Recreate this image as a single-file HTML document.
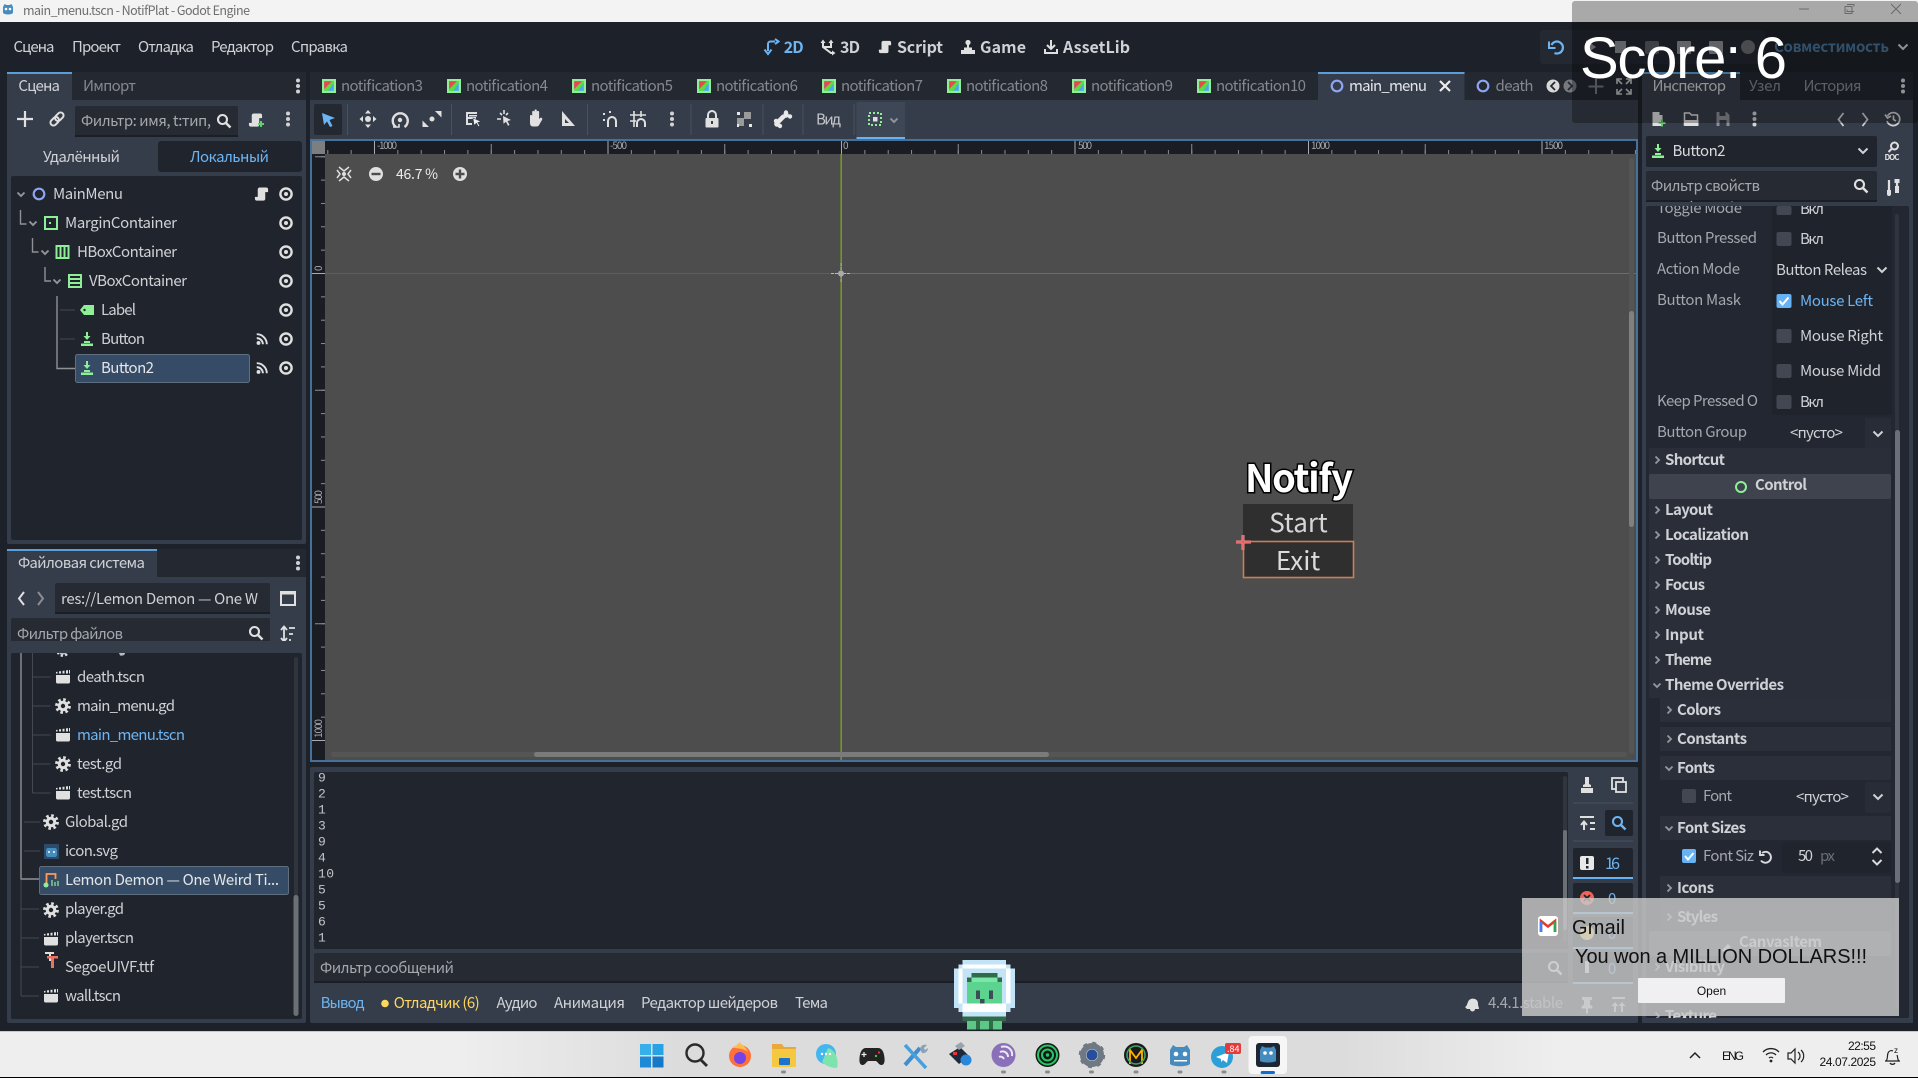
<!DOCTYPE html>
<html><head><meta charset="utf-8"><title>main_menu.tscn - NotifPlat - Godot Engine</title>
<style>
html,body{margin:0;padding:0;background:#1d2129;width:1918px;height:1078px;overflow:hidden}
svg{display:block}
text{font-family:"Noto Sans CJK SC","Liberation Sans",sans-serif;font-size:15px;fill:#cfd1d5;white-space:pre}
.d{fill:#85888e}.l{fill:#a4a7ac}.b{font-weight:700;fill:#cfd1d5}.blue{fill:#6cb4f2}
.m{font-family:"Liberation Mono","DejaVu Sans Mono",monospace;font-size:13px;fill:#c2c4c8}
.r{font-size:10px;fill:#a9abae}
.w{font-family:"Liberation Sans",sans-serif;fill:#101010}
</style></head><body>
<svg xmlns="http://www.w3.org/2000/svg" width="1918" height="1078" viewBox="0 0 1918 1078">
<defs>
<symbol id="eye" viewBox="0 0 16 16"><circle cx="8" cy="8" r="5.6" fill="none" stroke="#e0e0e0" stroke-width="2.4"/><circle cx="8" cy="8" r="2" fill="#e0e0e0"/></symbol>
<symbol id="chev" viewBox="0 0 16 16"><path d="M4.500 6.500l3.500 3.500 3.500-3.500" fill="none" stroke="#93969c" stroke-width="1.900"/></symbol>
<symbol id="chr" viewBox="0 0 16 16"><path d="M6.500 4.500l3.500 3.500-3.500 3.500" fill="none" stroke="#93969c" stroke-width="1.900"/></symbol>
<symbol id="sig" viewBox="0 0 16 16"><circle cx="4" cy="12.500" r="2.200" fill="#e0e0e0"/><path d="M2 7a7 7 0 0 1 7 7M2 2.500a11.500 11.500 0 0 1 11.500 11.500" fill="none" stroke="#e0e0e0" stroke-width="2.200"/></symbol>
<symbol id="script" viewBox="0 0 16 16"><path d="M6 1h7c1.500 0 2 1 2 2v3h-3v7c0 1.500-1 2-2 2H3c-1.500 0-2-1-2-2v-2h3V3c0-1 1-2 2-2z" fill="#e0e0e0"/></symbol>
<symbol id="btn" viewBox="0 0 16 16"><path d="M7 1h2v4h2.500L8 9 4.500 5H7zM5 10h6v2H5zM2 12.500h12V15H2z" fill="#8eef97"/></symbol>
<symbol id="clap" viewBox="0 0 16 16"><path d="M1 6h14v7c0 1-.7 1.500-1.500 1.500h-11C1.700 14.500 1 14 1 13zM1 4.500V3l1.500-.3v1.800zM4 4.500V2.400l2-.3v2.400zM7.500 4.500V1.900l2-.3v2.900zM11 4.500V1.400l2-.3v3.400zM14 4.500V1l1 0v3.500z" fill="#e0e0e0"/></symbol>
<symbol id="gear" viewBox="0 0 16 16"><circle cx="8" cy="8" r="6.500" fill="none" stroke="#e0e0e0" stroke-width="2.800" stroke-dasharray="2.600 2.500"/><circle cx="8" cy="8" r="5.300" fill="#e0e0e0"/><circle cx="8" cy="8" r="2.200" fill="#20242d"/></symbol>
<symbol id="tex" viewBox="0 0 16 16"><rect width="16" height="16" fill="#8eef97"/><rect x="2.500" y="2.500" width="11" height="11" fill="#49a8f0"/><path d="M2.500 2.500h9l-9 9z" fill="#e84a4a"/><path d="M7 13.500h-4.500v-2l9-9h2v2z" fill="#5fdc3c"/></symbol>
<symbol id="search" viewBox="0 0 16 16"><circle cx="6.500" cy="6.500" r="4.500" fill="none" stroke="#e0e0e0" stroke-width="2.100"/><path d="M10 10l4.500 4.500" stroke="#e0e0e0" stroke-width="2.500"/></symbol>
<symbol id="dots" viewBox="0 0 16 16"><circle cx="8" cy="2.500" r="2" fill="#d0d2d5"/><circle cx="8" cy="8" r="2" fill="#d0d2d5"/><circle cx="8" cy="13.500" r="2" fill="#d0d2d5"/></symbol>
<symbol id="ddown" viewBox="0 0 16 16"><path d="M3.500 5.500l4.500 4.500 4.500-4.500" fill="none" stroke="#d0d2d5" stroke-width="2"/></symbol>
<pattern id="hs" patternUnits="userSpaceOnUse" x="841" y="150" width="23.35" height="4"><rect width="1" height="4" fill="#8b8d91"/></pattern>
<pattern id="hm" patternUnits="userSpaceOnUse" x="841" y="144" width="116.75" height="10"><rect width="1" height="10" fill="#8b8d91"/></pattern>
<pattern id="hb" patternUnits="userSpaceOnUse" x="841" y="141" width="233.5" height="13"><rect width="1" height="13" fill="#a9abae"/></pattern>
<pattern id="vs" patternUnits="userSpaceOnUse" x="321" y="273" width="4" height="23.35"><rect width="4" height="1" fill="#8b8d91"/></pattern>
<pattern id="vm" patternUnits="userSpaceOnUse" x="315" y="273" width="10" height="116.75"><rect width="10" height="1" fill="#8b8d91"/></pattern>
<pattern id="vb" patternUnits="userSpaceOnUse" x="312" y="273" width="13" height="233.5"><rect width="13" height="1" fill="#a9abae"/></pattern>
<linearGradient id="tb" x1="0" x2="1" y1="0" y2="0"><stop offset="0" stop-color="#eee"/><stop offset=".2" stop-color="#dcdcdc"/><stop offset=".8" stop-color="#dcdcdc"/><stop offset="1" stop-color="#eee"/></linearGradient>
</defs>

<!-- window base -->
<rect width="1918" height="1078" fill="#1d2129"/>
<rect width="1918" height="22" fill="#f3f3f3"/>
<path d="M3 7l1.500-3 2 1h3l2-1L13 7v6c-2 2-8 2-10 0z" fill="#478cbf"/><circle cx="6" cy="9" r="1.300" fill="#fff"/><circle cx="10" cy="9" r="1.300" fill="#fff"/>
<text x="23" y="15" textLength="227" style="font-size:12.500px;fill:#6e6e6e">main_menu.tscn - NotifPlat - Godot Engine</text>

<!-- menu bar -->
<text x="13.500" y="52" textLength="41">Сцена</text>
<text x="72" y="52" textLength="49">Проект</text>
<text x="138" y="52" textLength="56">Отладка</text>
<text x="211" y="52" textLength="63">Редактор</text>
<text x="291" y="52" textLength="57">Справка</text>

<!-- main screen switch -->
<path d="M768 51V44c0-1.500 1-2.500 2.500-2.500H775M764.500 49.500l3.500 4.500 3.500-4.500M775 39l3.500 2.500-3.500 2.500" fill="none" stroke="#6cb4f2" stroke-width="2"/>
<text x="783.700" y="53" textLength="20" class="b" style="fill:#6cb4f2;font-size:16px">2D</text>
<path d="M823 42v5l8 6h2M823 47h8v-5" fill="none" stroke="#e0e0e0" stroke-width="2"/><path d="M823 39.500l-2.500 3.500h5zM831 39.500l-2.500 3.500h5zM835.500 53l-3.500-2.500v5z" fill="#e0e0e0"/>
<text x="840" y="53" textLength="20" class="b" style="font-size:16px">3D</text>
<use href="#script" x="878" y="40" width="14" height="14"/>
<text x="897" y="53" textLength="46" class="b" style="font-size:16px">Script</text>
<circle cx="968" cy="42.500" r="2.600" fill="#e0e0e0"/><path d="M967 44h2v4h-2zM964 47.500h8v3h-8zM961 50h14v4h-14z" fill="#e0e0e0"/>
<text x="980" y="53" textLength="46" class="b" style="font-size:16px">Game</text>
<path d="M1051 40v9M1047 45l4 4 4-4M1045 49v4h12v-4" fill="none" stroke="#e0e0e0" stroke-width="2"/>
<text x="1063" y="53" textLength="67" class="b" style="font-size:16px">AssetLib</text>

<!-- run bar -->
<rect x="1540" y="30" width="225" height="34" rx="3" fill="#232831"/>
<path d="M1551.500 45a6 6 0 1 1 3 8" fill="none" stroke="#6cb4f2" stroke-width="2.200"/><path d="M1549 41.500v6.500h6.500" fill="none" stroke="#6cb4f2" stroke-width="2"/>
<path d="M1586 40l10 7-10 7z" fill="#8d8f93"/><rect x="1615" y="41" width="11" height="12" fill="#8d8f93"/>
<rect x="1645" y="41" width="14" height="13" rx="2" fill="#5a5d63"/><rect x="1677" y="41" width="14" height="13" rx="1" fill="#8d8f93"/><rect x="1709" y="41" width="14" height="13" rx="1" fill="#8d8f93"/>
<circle cx="1748" cy="47" r="7" fill="#6a6c70"/>
<text x="1774" y="52" textLength="115" class="b" style="fill:#47739a">Совместимость</text>
<use href="#ddown" x="1895" y="39" width="16" height="16"/>

<!-- scene dock -->
<rect x="7" y="72" width="299" height="472" rx="2" fill="#363d4a"/>
<rect x="7" y="72" width="299" height="28" fill="#232831"/>
<rect x="7" y="72" width="65" height="28" fill="#363d4a"/><rect x="7" y="72" width="65" height="2" fill="#5c9fd8"/>
<text x="18.400" y="91" textLength="41.600">Сцена</text>
<text x="83" y="91" textLength="53" class="d">Импорт</text>
<use href="#dots" x="290" y="78" width="16" height="16"/>
<path d="M25 111v16M17 119h16" stroke="#e0e0e0" stroke-width="2.200"/>
<g transform="rotate(-45 57 119)" fill="none" stroke="#e0e0e0" stroke-width="2"><rect x="49" y="116" width="9.500" height="6" rx="3"/><rect x="55.500" y="116" width="9.500" height="6" rx="3"/></g>
<rect x="75" y="106" width="163" height="31" rx="2" fill="#252a33"/><rect x="75" y="135" width="163" height="2" fill="#1b1e25"/>
<text x="81" y="126" textLength="130" class="l">Фильтр: имя, t:тип,</text>
<use href="#search" x="216" y="113" width="16" height="16"/>
<use href="#script" x="248" y="112" width="15" height="16"/><path d="M258 124h6M261 121v6" stroke="#5fd36a" stroke-width="2"/>
<use href="#dots" x="280" y="111" width="16" height="16"/>
<text x="43" y="162" textLength="77">Удалённый</text>
<rect x="158" y="141" width="144" height="31" rx="3" fill="#20242d"/>
<text x="190" y="162" textLength="79" class="blue">Локальный</text>
<rect x="11" y="176" width="291" height="364" rx="2" fill="#20242d"/>
<!-- tree lines -->
<path d="M20.500 210v14h6M32.500 238v14h6M45 267v14h6M57 296v72.500h19" fill="none" stroke="#8f9196" stroke-width="1.400"/>
<path d="M60 310h15M60 339h15" stroke="#43474f" stroke-width="1"/>
<use href="#chev" x="13" y="186" width="16" height="16"/><use href="#chev" x="25" y="215" width="16" height="16"/><use href="#chev" x="37" y="244" width="16" height="16"/><use href="#chev" x="49" y="273" width="16" height="16"/>
<circle cx="39" cy="194" r="5.300" fill="none" stroke="#8da5f3" stroke-width="2.200"/>
<text x="53" y="199" textLength="70">MainMenu</text>
<rect x="45" y="217" width="12" height="12" fill="none" stroke="#8eef97" stroke-width="2"/><rect x="49" y="222" width="2" height="2" fill="#8eef97"/>
<text x="65" y="228" textLength="112">MarginContainer</text>
<rect x="56.500" y="246" width="12" height="12" fill="none" stroke="#8eef97" stroke-width="2"/><path d="M60.500 246v12M64.500 246v12" stroke="#8eef97" stroke-width="2"/>
<text x="77" y="257" textLength="100">HBoxContainer</text>
<rect x="69" y="275" width="12" height="12" fill="none" stroke="#8eef97" stroke-width="2"/><path d="M69 279h12M69 283h12" stroke="#8eef97" stroke-width="2"/>
<text x="89" y="286" textLength="98">VBoxContainer</text>
<path d="M84 305h10v10H84l-4-5z" fill="#8eef97"/><circle cx="84.500" cy="310" r="1.200" fill="#20242d"/>
<text x="101" y="315" textLength="35">Label</text>
<use href="#btn" x="79" y="331" width="16" height="16"/>
<text x="101" y="344" textLength="44">Button</text>
<rect x="75.500" y="354.500" width="174" height="28" rx="2" fill="#364c66" stroke="#5f6f80"/>
<use href="#btn" x="79" y="360" width="16" height="16"/>
<text x="101" y="373" textLength="53" style="fill:#e4e6e8">Button2</text>
<use href="#script" x="254" y="186" width="15" height="16"/>
<use href="#sig" x="255" y="332" width="14" height="14"/><use href="#sig" x="255" y="361" width="14" height="14"/>
<use href="#eye" x="278" y="186" width="16" height="16"/><use href="#eye" x="278" y="215" width="16" height="16"/><use href="#eye" x="278" y="244" width="16" height="16"/><use href="#eye" x="278" y="273" width="16" height="16"/><use href="#eye" x="278" y="302" width="16" height="16"/><use href="#eye" x="278" y="331" width="16" height="16"/><use href="#eye" x="278" y="360" width="16" height="16"/>

<!-- filesystem dock -->
<rect x="7" y="549" width="299" height="474" rx="2" fill="#363d4a"/>
<rect x="7" y="549" width="299" height="28" fill="#232831"/>
<rect x="7" y="549" width="150" height="28" fill="#363d4a"/><rect x="7" y="549" width="150" height="2" fill="#5c9fd8"/>
<text x="18" y="568" textLength="127">Файловая система</text>
<use href="#dots" x="290" y="555" width="16" height="16"/>
<path d="M24 592l-5 6.500 5 6.500" fill="none" stroke="#e0e0e0" stroke-width="2"/><path d="M38 592l5 6.500-5 6.500" fill="none" stroke="#8a8d92" stroke-width="2"/>
<rect x="55" y="583" width="215" height="31" rx="2" fill="#252a33"/><rect x="55" y="612" width="215" height="2" fill="#1b1e25"/>
<text x="61" y="604" textLength="197">res://Lemon Demon — One W</text>
<rect x="281" y="592" width="14" height="13" fill="none" stroke="#e0e0e0" stroke-width="2"/><rect x="280" y="591" width="16" height="3.500" fill="#e0e0e0"/>
<rect x="11" y="618" width="259" height="31" rx="2" fill="#252a33"/><rect x="11" y="647" width="259" height="2" fill="#1b1e25"/>
<text x="17" y="639" textLength="106" class="l">Фильтр файлов</text>
<use href="#search" x="248" y="625" width="16" height="16"/>
<path d="M284 627v14M281 630l3-3.500 3 3.500M281 638l3 3.500 3-3.500M289 628h6M289 634h4M289 640h2" fill="none" stroke="#e0e0e0" stroke-width="1.800"/>
<rect x="11" y="653" width="291" height="366" rx="2" fill="#20242d"/>
<path d="M21 653v226h18" fill="none" stroke="#8f9196" stroke-width="1.400"/>
<path d="M32.500 653v140M32.500 677h18M32.500 706h18M32.500 735h18M32.500 764h18M32.500 793h18M24 822h16M24 851h16M21 880v116M21 909h18M21 938h18M21 967h18M21 996h18" fill="none" stroke="#454950" stroke-width="1"/>
<use href="#gear" x="56" y="643" width="14" height="14"/>
<rect x="39.500" y="866.500" width="249" height="28" rx="2" fill="#364c66" stroke="#5f6f80"/>
<rect x="11" y="641" width="291" height="12" fill="#363d4a"/>
<rect x="11" y="649" width="259" height="4" fill="#363d4a"/>
<path d="M60 653h6v1.500h-6zM119 653h6c0 2-2 3-5 2.500z" fill="#b8babd"/>
<use href="#clap" x="55" y="669" width="16" height="16"/><use href="#gear" x="55" y="698" width="16" height="16"/><use href="#clap" x="55" y="727" width="16" height="16"/><use href="#gear" x="55" y="756" width="16" height="16"/><use href="#clap" x="55" y="785" width="16" height="16"/>
<use href="#gear" x="43" y="814" width="16" height="16"/>
<rect x="44" y="844" width="15" height="15" rx="1" fill="#2d4a6a"/><path d="M46 851c0-2 1-3 2-3h7c1 0 2 1 2 3v4c0 1-1 2-2 2h-7c-1 0-2-1-2-2z" fill="#478cbf"/><circle cx="49" cy="852" r="1" fill="#fff"/><circle cx="54" cy="852" r="1" fill="#fff"/>
<path d="M46.500 885v-11h9v5" fill="none" stroke="#ff9a5c" stroke-width="1.800"/><circle cx="46" cy="885" r="2.500" fill="#8eef97"/><path d="M52 880v6M55 882v4M58 881v5" stroke="#8eef97" stroke-width="1.200"/>
<use href="#gear" x="43" y="902" width="16" height="16"/><use href="#clap" x="43" y="931" width="16" height="16"/>
<path d="M45 960h9v2h-3v7h-2v-7h-4z" fill="#e0e0e0" transform="translate(0 -8)"/><path d="M47 956h11v2.500h-4V968h-3v-9.500h-4z" fill="#f0705f"/>
<use href="#clap" x="43" y="988" width="16" height="16"/>
<text x="77" y="682" textLength="68">death.tscn</text>
<text x="77" y="711" textLength="98">main_menu.gd</text>
<text x="77" y="740" textLength="108" class="blue">main_menu.tscn</text>
<text x="77" y="769" textLength="45">test.gd</text>
<text x="77" y="798" textLength="55">test.tscn</text>
<text x="65" y="827" textLength="63">Global.gd</text>
<text x="65" y="856" textLength="53">icon.svg</text>
<text x="65" y="885" textLength="214" style="fill:#e4e6e8">Lemon Demon — One Weird Ti...</text>
<text x="65" y="914" textLength="59">player.gd</text>
<text x="65" y="943" textLength="69">player.tscn</text>
<text x="65" y="972" textLength="89">SegoeUIVF.ttf</text>
<text x="65" y="1001" textLength="56">wall.tscn</text>
<rect x="294" y="657" width="4" height="358" rx="2" fill="#2f343d"/><rect x="293.500" y="895" width="5" height="121" rx="2.500" fill="#6b6f76"/>

<!-- center tabs -->
<rect x="310" y="72" width="1328" height="28" fill="#232831"/>
<use href="#tex" x="322" y="79" width="14" height="14"/><text x="341" y="91" textLength="82" class="d">notification3</text>
<use href="#tex" x="447" y="79" width="14" height="14"/><text x="466" y="91" textLength="82" class="d">notification4</text>
<use href="#tex" x="572" y="79" width="14" height="14"/><text x="591" y="91" textLength="82" class="d">notification5</text>
<use href="#tex" x="697" y="79" width="14" height="14"/><text x="716" y="91" textLength="82" class="d">notification6</text>
<use href="#tex" x="822" y="79" width="14" height="14"/><text x="841" y="91" textLength="82" class="d">notification7</text>
<use href="#tex" x="947" y="79" width="14" height="14"/><text x="966" y="91" textLength="82" class="d">notification8</text>
<use href="#tex" x="1072" y="79" width="14" height="14"/><text x="1091" y="91" textLength="82" class="d">notification9</text>
<use href="#tex" x="1197" y="79" width="14" height="14"/><text x="1216" y="91" textLength="90" class="d">notification10</text>
<rect x="1318" y="72" width="146.500" height="28" fill="#363d4a"/><rect x="1318" y="72" width="146.500" height="2" fill="#5c9fd8"/>
<circle cx="1337" cy="86" r="5.300" fill="none" stroke="#8da5f3" stroke-width="2.200"/>
<text x="1349" y="91" textLength="78" style="fill:#e4e6e8">main_menu</text>
<path d="M1440 81l10 10M1450 81l-10 10" stroke="#eee" stroke-width="2.200"/>
<circle cx="1483" cy="86" r="5.300" fill="none" stroke="#8da5f3" stroke-width="2.200"/>
<text x="1495.500" y="91" textLength="38" class="d">death</text>
<circle cx="1553" cy="86" r="6.500" fill="#d8d8d8"/><path d="M1555 82l-4 4 4 4" fill="none" stroke="#232831" stroke-width="1.800"/>
<circle cx="1570" cy="86" r="6.500" fill="#77797d"/><path d="M1568 82l4 4-4 4" fill="none" stroke="#232831" stroke-width="1.800"/>
<path d="M1596 79v15M1588.500 86.500h15" stroke="#75787e" stroke-width="2"/>
<path d="M1617 84v-5h5M1626 79h5v5M1631 89v5h-5M1622 94h-5v-5M1618 80l4 4M1630 80l-4 4M1630 93l-4-4M1618 93l4-4" fill="none" stroke="#c0c2c5" stroke-width="1.600"/>

<!-- toolbar -->
<rect x="310" y="100" width="1328" height="39" fill="#363d4a"/>
<rect x="314" y="104" width="28" height="31" rx="2" fill="#232831"/>
<path d="M322 113l13 5-5.500 2 3 6-2.500 1-3-5.500-3 3.500z" fill="#6cb4f2"/>
<path d="M347.500 104v31M451.500 104v31M587.500 104v31M691 104v31M763 104v31M803 104v31M854 104v31" stroke="#4a515e" stroke-width="1"/>
<circle cx="368" cy="119" r="3" fill="#e0e0e0"/><path d="M368 110l-3 3.500h6zM368 128l-3-3.500h6zM359.500 119l3.500-3v6zM376.500 119l-3.500-3v6z" fill="#e0e0e0"/>
<path d="M396 127a7.500 7.500 0 1 1 8.500 0" fill="none" stroke="#e0e0e0" stroke-width="2.400"/><circle cx="400" cy="120" r="2.200" fill="#e0e0e0"/><path d="M393 127h6v-3" fill="none" stroke="#e0e0e0" stroke-width="1.600"/>
<circle cx="432" cy="119" r="2.500" fill="#e0e0e0"/><path d="M435 111h6.500v6.500zM429 127h-6.500v-6.500z" fill="#e0e0e0"/>
<path d="M466 112h11v2h-9v3h8v2h-8v4h4v2h-6z" fill="#e0e0e0"/><rect x="469" y="115" width="8" height="1.500" fill="#e0e0e0"/><path d="M473 118l8 3.500-3.200 1 2 3.500-1.500.7-1.800-3.500-2.500 2z" fill="#f0f0f0" stroke="#363d4a" stroke-width=".6"/>
<path d="M504 110v4M497 119h4M500 113l2 2M508 113l-2 2" stroke="#e0e0e0" stroke-width="1.600"/><path d="M503 116l8 4-3.500 1 2 4-1.500.7-2-4-2.500 2z" fill="#e0e0e0"/>
<path d="M530 119v-3c0-1.500 2.200-1.500 2.200 0v-4c0-1.500 2.300-1.500 2.300 0v-1.500c0-1.500 2.300-1.500 2.300 0v1.500c0-1.500 2.300-1.500 2.300 0v7l1-1c1-1 2.900.5 2 1.800l-3 5.200c-.7 1.200-1.600 1.500-3 1.500h-2.500c-2.500 0-3.600-1-3.600-4z" fill="#e0e0e0"/>
<path d="M562 111l13 15h-13zM565 119v4h4z" fill="#e0e0e0" fill-rule="evenodd"/>
<path d="M603 113h2v2h-2zM609 111h2v2h-2zM603 119h2v2h-2z" fill="#e0e0e0"/><path d="M608 127v-6a4 4 0 0 1 8 0v6" fill="none" stroke="#e0e0e0" stroke-width="2"/>
<path d="M634 111v16M641 111v6M630 115h16M630 121h6" stroke="#e0e0e0" stroke-width="1.600"/><path d="M637 127v-4a4 4 0 0 1 8 0v4" fill="none" stroke="#e0e0e0" stroke-width="2"/>
<use href="#dots" x="664" y="111" width="16" height="16"/>
<rect x="705.500" y="118" width="13" height="9.500" rx="1" fill="#e0e0e0"/><path d="M708 118v-3a4 4 0 0 1 8 0v3" fill="none" stroke="#e0e0e0" stroke-width="2"/><rect x="711" y="121" width="2" height="3" fill="#363d4a"/>
<rect x="737" y="118" width="7" height="8" fill="#9a9a9a"/><rect x="744" y="112" width="7" height="7" fill="#9a9a9a"/><path d="M737 112h3v3h-3zM737 124h2v3h-2zM749 124h3v3h-3z" fill="#e8e8e8"/>
<path d="M778 122l6-6" stroke="#e8e8e8" stroke-width="4.500"/><circle cx="777" cy="124" r="2.800" fill="#e8e8e8"/><circle cx="776" cy="121" r="2.200" fill="#e8e8e8"/><circle cx="780" cy="126" r="2.200" fill="#e8e8e8"/><circle cx="786" cy="112.500" r="2.200" fill="#e8e8e8"/><circle cx="790" cy="116.500" r="2.200" fill="#e8e8e8"/><circle cx="786" cy="115" r="2.800" fill="#e8e8e8"/>
<text x="816" y="124.500" textLength="25" class="l" style="fill:#c5c7ca">Вид</text>
<rect x="856.500" y="102" width="48.500" height="35" fill="#3e4755"/><rect x="856.500" y="137" width="48.500" height="2" fill="#66b2f5"/>
<rect x="869" y="113" width="12" height="12" fill="none" stroke="#8eef97" stroke-width="2" stroke-dasharray="2 2"/><rect x="873" y="117" width="4.500" height="4.500" fill="#e0e0e0"/>
<use href="#chev" x="886" y="112" width="16" height="16"/>

<!-- viewport -->
<rect x="310" y="139" width="1328" height="623" fill="#477199"/>
<rect x="312" y="141" width="1324" height="619" fill="#1a1d24"/>
<rect x="312" y="141" width="13" height="13" fill="#7d7e80"/>
<rect x="325" y="154" width="1311" height="606" fill="#4d4d4d"/>
<rect x="325" y="150" width="1311" height="4" fill="url(#hs)"/>
<rect x="325" y="144" width="1311" height="10" fill="url(#hm)"/>
<rect x="325" y="141" width="1311" height="13" fill="url(#hb)"/>
<rect x="321" y="154" width="4" height="606" fill="url(#vs)"/>
<rect x="315" y="154" width="10" height="606" fill="url(#vm)"/>
<rect x="312" y="154" width="13" height="606" fill="url(#vb)"/>
<text x="377" y="149" class="r" textLength="20">-1000</text><text x="610" y="149" class="r" textLength="17">-500</text><text x="843" y="149" class="r">0</text><text x="1078" y="149" class="r" textLength="14">500</text><text x="1311" y="149" class="r" textLength="19">1000</text><text x="1544" y="149" class="r" textLength="19">1500</text>
<text transform="translate(322,271) rotate(-90)" class="r">0</text>
<text transform="translate(322,504) rotate(-90)" class="r" textLength="14">500</text>
<text transform="translate(322,738) rotate(-90)" class="r" textLength="19">1000</text>
<rect x="325" y="273" width="516" height="1" fill="#b2374c"/><rect x="841" y="273" width="795" height="1" fill="#9c4c96"/>
<rect x="840.500" y="154" width="1.300" height="606" fill="#7fa81a"/>
<path d="M841 263v20M831 273.500h20" stroke="#bbb" stroke-width="1" stroke-dasharray="3 1"/><circle cx="841" cy="273.500" r="3" fill="#aaa"/>
<rect x="1629" y="158" width="5" height="596" rx="2.500" fill="#555"/><rect x="1629" y="311" width="5" height="216" rx="2.500" fill="#808080"/>
<rect x="331" y="752" width="1296" height="5" rx="2.500" fill="#555"/><rect x="534" y="752" width="515" height="5" rx="2.500" fill="#7b7b7b"/>
<path d="M339 167l5 4 5-4M339 181l5-4 5 4M337 170l3 4-3 4M351 170l-3 4 3 4" fill="none" stroke="#e0e0e0" stroke-width="1.500"/><circle cx="344" cy="174" r="2" fill="#e0e0e0"/>
<circle cx="376" cy="174" r="7" fill="#e0e0e0"/><rect x="371.500" y="172.800" width="9" height="2.400" fill="#4d4d4d"/>
<text x="396" y="179" textLength="42" style="fill:#ededed;font-size:14px">46.7 %</text>
<circle cx="460" cy="174" r="7" fill="#e0e0e0"/><path d="M455.500 174h9M460 169.500v9" stroke="#4d4d4d" stroke-width="2.400"/>

<!-- game UI -->
<text x="1245" y="492" textLength="108" style="font-size:38px;font-weight:700;fill:#fff;stroke:#000;stroke-width:3px;paint-order:stroke">Notify</text>
<rect x="1243" y="504" width="110" height="37" fill="#2f2f2f"/>
<text x="1298.500" y="532" text-anchor="middle" style="font-size:26px;fill:#d6d6d6">Start</text>
<rect x="1243.500" y="541.500" width="110" height="36" fill="#2f2f2f" stroke="#c87f5b" stroke-width="1.600"/>
<text x="1298" y="570" text-anchor="middle" style="font-size:26px;fill:#dcdcdc">Exit</text>
<path d="M1243 535v15M1236 542h15" stroke="#fb8c8c" stroke-width="3"/><path d="M1243 535v15M1236 542h15" stroke="#d45050" stroke-width="1"/>

<!-- bottom panel -->
<rect x="310" y="767" width="1328" height="256" rx="2" fill="#363d4a"/>
<rect x="314" y="772" width="1254" height="177" rx="2" fill="#21252d"/>
<text x="318" y="781.500" class="m">9</text><text x="318" y="797.500" class="m">2</text><text x="318" y="813.500" class="m">1</text><text x="318" y="829.500" class="m">3</text><text x="318" y="845.500" class="m">9</text><text x="318" y="861.500" class="m">4</text><text x="318" y="877.500" class="m" textLength="16">10</text><text x="318" y="893.500" class="m">5</text><text x="318" y="909.500" class="m">5</text><text x="318" y="925.500" class="m">6</text><text x="318" y="941.500" class="m">1</text>
<rect x="1563" y="776" width="4" height="166" rx="2" fill="#30353e"/><rect x="1563" y="830" width="4" height="100" rx="2" fill="#6b6f76"/>
<rect x="314" y="953" width="1254" height="30" rx="2" fill="#252a33"/><rect x="314" y="981" width="1254" height="2" fill="#1b1e25"/>
<text x="320" y="973" textLength="134" class="l">Фильтр сообщений</text>
<use href="#search" x="1547" y="960" width="16" height="16"/>
<text x="320.600" y="1008" textLength="44" class="blue">Вывод</text>
<circle cx="385" cy="1003.500" r="3.800" fill="#ffd75e"/>
<text x="393.700" y="1008" textLength="86" style="fill:#ffd75e">Отладчик (6)</text>
<text x="496.500" y="1008" textLength="41">Аудио</text>
<text x="554" y="1008" textLength="71">Анимация</text>
<text x="641" y="1008" textLength="137">Редактор шейдеров</text>
<text x="795" y="1008" textLength="33">Тема</text>
<path d="M1465 1007c2-1 2-3 3-5 1-3 4-4 7-3 2 1 3 2 3 5 0 2 1 3 1 5l-12 0zM1470 1009a2.500 2.500 0 0 0 5 0" fill="#e0e0e0"/>
<text x="1488" y="1008" textLength="75" class="l">4.4.1.stable</text>
<path d="M1582 997h10v2.500l-2 1v4l2.500 2v2h-4.500v5h-2v-5h-4.500v-2l2.500-2v-4l-2-1z" fill="#c9cbce"/>
<path d="M1612 997h13v2h-13zM1615 1002l-3.500 4h2.500v6h2v-6h2.500zM1622 1002l-3.500 4h2.500v6h2v-6h2.500z" fill="#c9cbce"/>
<path d="M1585 777h4v7l2 1v2h-8v-2l2-1zM1581 788h12v5h-12z" fill="#e0e0e0"/>
<rect x="1612" y="778" width="11" height="11" fill="none" stroke="#e0e0e0" stroke-width="1.800"/><rect x="1616" y="782" width="10" height="10" fill="#363d4a" stroke="#e0e0e0" stroke-width="1.800"/>
<path d="M1573 803h60M1573 841h60" stroke="#4a515e" stroke-width="1"/>
<path d="M1580 817h14M1590 823h5M1590 829h5" stroke="#e0e0e0" stroke-width="2"/><path d="M1584 830v-8M1581 825l3-3.500 3 3.500" fill="none" stroke="#e0e0e0" stroke-width="2"/>
<rect x="1605" y="810" width="28" height="26" rx="2" fill="#20242d"/>
<g transform="translate(1611 815)"><circle cx="6.500" cy="6.500" r="4.500" fill="none" stroke="#6cb4f2" stroke-width="2.100"/><path d="M10 10l4.500 4.500" stroke="#6cb4f2" stroke-width="2.500"/></g>
<rect x="1573" y="848" width="60" height="30" rx="2" fill="#20242d"/><rect x="1573" y="877" width="60" height="2" fill="#66b2f5"/>
<rect x="1580" y="856" width="14" height="14" rx="2" fill="#e8e8e8"/><rect x="1586" y="858" width="2.500" height="6" fill="#20242d"/><rect x="1586" y="866" width="2.500" height="2.500" fill="#20242d"/>
<text x="1605" y="869" textLength="15" class="blue" style="font-size:16px">16</text>
<rect x="1573" y="883" width="60" height="30" rx="2" fill="#20242d"/><rect x="1573" y="912" width="60" height="2" fill="#66b2f5"/>
<circle cx="1587" cy="898" r="7" fill="#f2645a"/><path d="M1584 895l6 6M1590 895l-6 6" stroke="#20242d" stroke-width="1.800"/>
<text x="1608" y="904" class="blue">0</text>
<rect x="1573" y="917" width="60" height="31" rx="2" fill="#20242d"/><rect x="1573" y="947" width="60" height="2" fill="#66b2f5"/>
<circle cx="1587" cy="933" r="7" fill="#ffdd65"/>
<text x="1608" y="939" class="blue">0</text>
<rect x="1573" y="952" width="60" height="31" rx="2" fill="#20242d"/><rect x="1573" y="982" width="60" height="2" fill="#66b2f5"/>
<rect x="1585" y="961" width="4" height="12" fill="#e0e0e0"/><text x="1608" y="974" class="blue">0</text>

<!-- player sprite -->
<g transform="translate(954 960) scale(4.350)" shape-rendering="crispEdges">
<path d="M2 0h10v1h1v1h1v9h-1v1h-1v1H2v-1H1v-1H0V2h1V1h1z" fill="#c3e4f6"/>
<path d="M2 1h10v1h1v8h-1V2H2v8H1V2h1zM2 10h10v2H2z" fill="#fff"/>
<path d="M4 3h6v1h1v6H3V4h1z" fill="#2f6b47"/>
<path d="M3 5h8v5H3z" fill="#5cd38f"/>
<path d="M4 4h6v1H4z" fill="#79e6aa"/>
<path d="M5 7h1v2H5zM8 7h1v2H8zM6 9h1v1H6z" fill="#3b4e55"/>
<path d="M2 13h10v1h-1v2H3v-2H2z" fill="#2f6b47"/>
<path d="M3 14h2v2H3zM6 14h2v2H6zM9 14h2v2H9z" fill="#5cc787"/>
</g>

<!-- inspector -->
<rect x="1642" y="72" width="271" height="951" rx="2" fill="#363d4a"/>
<rect x="1642" y="72" width="271" height="28" fill="#232831"/>
<rect x="1642" y="72" width="98" height="28" fill="#363d4a"/><rect x="1642" y="72" width="98" height="2" fill="#5c9fd8"/>
<text x="1652.500" y="91" textLength="73.500">Инспектор</text>
<text x="1749" y="91" textLength="32" class="d">Узел</text>
<text x="1803.500" y="91" textLength="58" class="d">История</text>
<use href="#dots" x="1895" y="78" width="16" height="16"/>
<g transform="translate(-1.500 0)">
<path d="M1654 112h7l3 3v11h-10zM1661 112v3h3" fill="#e0e0e0"/><path d="M1660 123h7M1663.500 119.500v7" stroke="#5fd36a" stroke-width="2"/>
<path d="M1686 125v-12h5l2 2h6v10z" fill="none" stroke="#e0e0e0" stroke-width="1.500"/><rect x="1686" y="120" width="14" height="6" fill="#e0e0e0"/>
<path d="M1718 112h10l3 3v11h-13z" fill="#8d9096"/><rect x="1721" y="112" width="6" height="4" fill="#363d4a"/><rect x="1721" y="120" width="7" height="6" fill="#363d4a"/>
<use href="#dots" x="1748" y="111" width="16" height="16"/>
<path d="M1845 113l-5 6.500 5 6.500" fill="none" stroke="#cfd1d5" stroke-width="1.800"/><path d="M1864 113l5 6.500-5 6.500" fill="none" stroke="#cfd1d5" stroke-width="1.800"/>
<path d="M1889 116a6.500 6.500 0 1 1-.5 5M1886.500 114.500l2.500 3.500 3.500-2M1895 115.500v4l2.500 1.500" fill="none" stroke="#cfd1d5" stroke-width="1.700"/>
</g>
<rect x="1646" y="136" width="231" height="31" rx="2" fill="#20242d"/>
<use href="#btn" x="1650" y="143" width="16" height="16"/>
<text x="1672.500" y="156" textLength="53" style="fill:#d8dadd">Button2</text>
<use href="#ddown" x="1855" y="143" width="16" height="16"/>
<circle cx="1894.500" cy="146" r="3.500" fill="none" stroke="#e0e0e0" stroke-width="2"/><path d="M1891.500 149l-3 3" stroke="#e0e0e0" stroke-width="2"/>
<text x="1884.500" y="160" textLength="15" style="font-size:8px;font-weight:700;fill:#e0e0e0">DOC</text>
<rect x="1646" y="171" width="231" height="31" rx="2" fill="#252a33"/><rect x="1646" y="200" width="231" height="2" fill="#1b1e25"/>
<text x="1651" y="191" textLength="109" class="l">Фильтр свойств</text>
<use href="#search" x="1853" y="178" width="16" height="16"/>
<g transform="translate(-2 0)"><path d="M1891 180v11M1899 180v11" stroke="#e0e0e0" stroke-width="2.200"/><path d="M1889 190h4v4a2 2 0 0 1-4 0zM1896.500 179v4h5v-4M1897 186h4v7h-4z" fill="#e0e0e0"/></g>
<rect x="1646" y="206" width="263" height="812" rx="2" fill="#222731"/>
<rect x="1772" y="206" width="120" height="209" fill="#1f232c"/>
<text x="1657" y="213" textLength="85" class="l">Toggle Mode</text>
<rect x="1776.500" y="206" width="15" height="9" rx="2" fill="#424751"/>
<text x="1800" y="214" textLength="24">Вкл</text>
<rect x="1646" y="202" width="263" height="4" fill="#363d4a"/>
<text x="1657" y="243" textLength="100" class="l">Button Pressed</text>
<rect x="1776.500" y="232" width="15" height="14" rx="2" fill="#424751"/>
<text x="1800" y="244" textLength="24">Вкл</text>
<text x="1657" y="274" textLength="83" class="l">Action Mode</text>
<text x="1776" y="275" textLength="91">Button Releas</text>
<use href="#ddown" x="1874" y="262" width="16" height="16"/>
<text x="1657" y="305" textLength="84" class="l">Button Mask</text>
<rect x="1776.500" y="294" width="15" height="14" rx="2" fill="#66b2f5"/><path d="M1779.500 301l3 3.500 6-7" fill="none" stroke="#fff" stroke-width="2"/>
<text x="1800" y="306" textLength="73" class="blue">Mouse Left</text>
<rect x="1776.500" y="329" width="15" height="14" rx="2" fill="#424751"/>
<text x="1800" y="341" textLength="83">Mouse Right</text>
<rect x="1776.500" y="364" width="15" height="14" rx="2" fill="#424751"/>
<text x="1800" y="376" textLength="81">Mouse Midd</text>
<text x="1657" y="406" textLength="101" class="l">Keep Pressed O</text>
<rect x="1776.500" y="395" width="15" height="14" rx="2" fill="#424751"/>
<text x="1800" y="407" textLength="24">Вкл</text>
<text x="1657" y="437" textLength="90" class="l">Button Group</text>
<text x="1790" y="438" textLength="53">&lt;пусто&gt;</text>
<rect x="1865" y="418" width="26" height="30" fill="#272c36"/>
<use href="#ddown" x="1870" y="426" width="16" height="16"/>
<rect x="1649" y="448" width="242" height="250" fill="#292e38"/>
<rect x="1649" y="474" width="242" height="25" rx="2" fill="#3e434d"/>
<circle cx="1741" cy="487" r="5" fill="none" stroke="#8eef97" stroke-width="2"/>
<text x="1755" y="490" textLength="52" class="b">Control</text>
<use href="#chr" x="1649" y="452" width="16" height="16"/><text x="1665" y="465" textLength="60" class="b">Shortcut</text>
<use href="#chr" x="1649" y="502" width="16" height="16"/><text x="1665" y="515" textLength="48" class="b">Layout</text>
<use href="#chr" x="1649" y="527" width="16" height="16"/><text x="1665" y="540" textLength="84" class="b">Localization</text>
<use href="#chr" x="1649" y="552" width="16" height="16"/><text x="1665" y="565" textLength="47" class="b">Tooltip</text>
<use href="#chr" x="1649" y="577" width="16" height="16"/><text x="1665" y="590" textLength="40" class="b">Focus</text>
<use href="#chr" x="1649" y="602" width="16" height="16"/><text x="1665" y="615" textLength="46" class="b">Mouse</text>
<use href="#chr" x="1649" y="627" width="16" height="16"/><text x="1665" y="640" textLength="39" class="b">Input</text>
<use href="#chr" x="1649" y="652" width="16" height="16"/><text x="1665" y="665" textLength="47" class="b">Theme</text>
<use href="#chev" x="1649" y="677" width="16" height="16"/><text x="1665" y="690" textLength="119" class="b">Theme Overrides</text>
<rect x="1660" y="698" width="231" height="24" fill="#2a2f39"/>
<rect x="1660" y="727" width="231" height="24" fill="#2a2f39"/>
<rect x="1660" y="756" width="231" height="24" fill="#2a2f39"/>
<rect x="1660" y="816" width="231" height="24" fill="#2a2f39"/>
<rect x="1660" y="876" width="231" height="24" fill="#2a2f39"/>
<rect x="1660" y="905" width="231" height="24" fill="#2a2f39"/>
<use href="#chr" x="1661" y="702" width="16" height="16"/><text x="1677" y="715" textLength="44" class="b">Colors</text>
<use href="#chr" x="1661" y="731" width="16" height="16"/><text x="1677" y="744" textLength="70" class="b">Constants</text>
<use href="#chev" x="1661" y="760" width="16" height="16"/><text x="1677" y="773" textLength="38" class="b">Fonts</text>
<rect x="1682" y="789" width="14" height="14" rx="2" fill="#424751"/>
<text x="1703" y="801" textLength="29" class="l">Font</text>
<text x="1796" y="802" textLength="53">&lt;пусто&gt;</text>
<rect x="1865" y="782" width="26" height="31" rx="2" fill="#272c36"/>
<use href="#ddown" x="1870" y="789" width="16" height="16"/>
<use href="#chev" x="1661" y="820" width="16" height="16"/><text x="1677" y="833" textLength="69" class="b">Font Sizes</text>
<rect x="1682" y="849" width="14" height="14" rx="2" fill="#66b2f5"/><path d="M1685 856l3 3.500 5.500-6.500" fill="none" stroke="#fff" stroke-width="2"/>
<text x="1703" y="861" textLength="51" class="l">Font Siz</text>
<path d="M1762 852a5.500 5.500 0 1 1-1 7.500M1760 849.500v4.500h4.500" fill="none" stroke="#d8dadd" stroke-width="1.900" transform="translate(0 1)"/>
<rect x="1782" y="842" width="109" height="31" rx="2" fill="#20242d"/>
<text x="1798" y="861" textLength="15">50</text><text x="1820" y="861" textLength="15" style="fill:#6b6e74">px</text>
<path d="M1872.500 853l4.500-4.500 4.500 4.500M1872.500 860l4.500 4.500 4.500-4.500" fill="none" stroke="#d8dadd" stroke-width="2"/>
<use href="#chr" x="1661" y="880" width="16" height="16"/><text x="1677" y="893" textLength="37" class="b">Icons</text>
<use href="#chr" x="1661" y="909" width="16" height="16"/><text x="1677" y="922" textLength="41" class="b">Styles</text>
<rect x="1649" y="931" width="242" height="25" rx="2" fill="#3e434d"/>
<path d="M1722 950l6-6 3 3-7 5z" fill="#cfd1d5"/>
<text x="1739" y="947" textLength="83" class="b">CanvasItem</text>
<use href="#chr" x="1649" y="959" width="16" height="16"/><text x="1665" y="972" textLength="60" class="b">Visibility</text>
<use href="#chr" x="1649" y="984" width="16" height="16"/><text x="1665" y="997" textLength="62" class="b">Ordering</text>
<use href="#chr" x="1649" y="1008" width="16" height="16"/><text x="1665" y="1021" textLength="52" class="b">Texture</text>
<rect x="1642" y="1018" width="271" height="5" fill="#363d4a"/>
<rect x="1895" y="214" width="4" height="796" rx="2" fill="#2f343d"/><rect x="1895" y="430" width="5" height="453" rx="2.500" fill="#6b7078"/>

<!-- taskbar -->
<rect y="1031" width="1918" height="46" fill="#eeeeee"/>
<rect x="460" y="1031" width="1100" height="46" fill="url(#tb)"/>
<rect y="1031" width="1918" height="1" fill="#c8c8c8"/>
<rect y="1077" width="1918" height="1" fill="#000"/>
<!-- win -->
<rect x="640" y="1044" width="11" height="11" fill="#35b0ea"/><rect x="652.500" y="1044" width="11" height="11" fill="#28a2e5"/><rect x="640" y="1056.500" width="11" height="11" fill="#1d8ad8"/><rect x="652.500" y="1056.500" width="11" height="11" fill="#1479c9"/>
<circle cx="695" cy="1053" r="8.500" fill="none" stroke="#2a2a2a" stroke-width="2.400"/><path d="M701 1060l6 6" stroke="#2a2a2a" stroke-width="2.800"/>
<circle cx="740" cy="1056" r="11" fill="#ff7139"/><circle cx="740" cy="1058" r="6" fill="#7542e5"/><path d="M733 1048l7-6c1 3 6 4 8 10-3-3-10-4-15-4z" fill="#ffbd4f"/>
<path d="M772 1044h10l2 3h12v20h-24z" fill="#e8a93a"/><rect x="772" y="1049" width="24" height="18" fill="#f5c842"/><rect x="779" y="1058" width="11" height="7" rx="1" fill="#1b74c9"/>
<circle cx="826" cy="1054" r="10" fill="#42b6ee"/><path d="M828 1048c8 2 11 12 9 20-6 0-11-2-15-6z" fill="#7fe3ae"/><circle cx="822" cy="1054" r="1.200" fill="#fff"/><circle cx="826" cy="1054" r="1.200" fill="#fff"/><circle cx="830" cy="1054" r="1.200" fill="#fff"/>
<path d="M866 1048h12c4 0 6 4 6.500 10 .5 5-1 7-3 7-3 0-4-4-6-4h-7c-2 0-3 4-6 4-2 0-3.500-2-3-7 .5-6 2.500-10 6.500-10z" fill="#232323"/><path d="M864 1052v5M861.500 1054.500h5" stroke="#eee" stroke-width="1.200"/><circle cx="879" cy="1052.500" r="1.100" fill="#e33"/><circle cx="876" cy="1056" r="1.100" fill="#4d4"/>
<path d="M905 1065l15-17" stroke="#3f8fd0" stroke-width="4"/><path d="M905 1045l21 23" stroke="#46a0de" stroke-width="3.500"/><path d="M920 1049a5 5 0 0 1 7-4l-3 3 1 2 3-2a5 5 0 0 1-6 5z" fill="#8aa2b8"/>
<path d="M949 1054l11-7 9 9-10 8z" fill="#1e2a3c"/><circle cx="966" cy="1060" r="5.500" fill="#2a86d8"/><path d="M955 1046l6-4 4 4-6 4z" fill="#9aa3ad"/><rect x="953" y="1052" width="4" height="3" fill="#e33"/>
<circle cx="1003.500" cy="1055" r="12" fill="#8a70b8"/><path d="M1001 1047c7-2 12 3 11 9M1000 1052c4-2 8 1 8 5M999 1057c2-1 4 0 5 2" fill="none" stroke="#efe8f8" stroke-width="2"/>
<circle cx="1047.500" cy="1055" r="12" fill="#101a14"/><circle cx="1047.500" cy="1055" r="9.500" fill="none" stroke="#2cc36b" stroke-width="2"/><circle cx="1047.500" cy="1055" r="5.500" fill="none" stroke="#2cc36b" stroke-width="2"/><circle cx="1047.500" cy="1055" r="1.700" fill="#2cc36b"/>
<circle cx="1092" cy="1055" r="9" fill="none" stroke="#6f7984" stroke-width="6"/><circle cx="1092" cy="1055" r="12" fill="none" stroke="#6f7984" stroke-width="2.500" stroke-dasharray="4 5.400"/><circle cx="1092" cy="1055" r="5.500" fill="#274e9a"/>
<circle cx="1136" cy="1055" r="12" fill="#1a1a1a"/><path d="M1130 1064v-14l6 8 6-8v14" fill="none" stroke="#ffb400" stroke-width="1.800"/><circle cx="1136" cy="1055" r="9" fill="none" stroke="#3ea66a" stroke-width="1.500"/>
<path d="M1170 1050l3-5 3 2h8l3-2 3 5v14c-3 3-17 3-20 0z" fill="#478cbf"/><circle cx="1176" cy="1054" r="2.300" fill="#fff"/><circle cx="1185" cy="1054" r="2.300" fill="#fff"/><rect x="1174" y="1060" width="13" height="1.500" fill="#fff"/>
<circle cx="1222" cy="1057" r="11" fill="#2c9ed8"/><path d="M1216 1057l13-5-2 11-4-3-2 2v-3z" fill="#fff"/>
<rect x="1225" y="1043" width="16" height="11" rx="2" fill="#e33b3b"/><text x="1227" y="1052" style="font-size:9px;fill:#fff">.84</text>
<rect x="1248.500" y="1036" width="38.500" height="38" rx="4" fill="#f6f6f6"/>
<rect x="1256" y="1043" width="24" height="24" rx="3" fill="#1f2633"/>
<path d="M1260 1050l2-4 3 1.500h6l3-1.500 2 4v11c-2 2-14 2-16 0z" fill="#478cbf"/><circle cx="1265" cy="1053" r="1.800" fill="#fff"/><circle cx="1271" cy="1053" r="1.800" fill="#fff"/>
<rect x="1260.600" y="1071" width="14.400" height="3" rx="1.500" fill="#0a6fd1"/>
<rect x="781" y="1070.500" width="5" height="3" rx="1.500" fill="#8a8a8a"/><rect x="1001" y="1070.500" width="5" height="3" rx="1.500" fill="#8a8a8a"/><rect x="1045" y="1070.500" width="5" height="3" rx="1.500" fill="#8a8a8a"/><rect x="1089" y="1070.500" width="5" height="3" rx="1.500" fill="#8a8a8a"/><rect x="1133.500" y="1070.500" width="5" height="3" rx="1.500" fill="#8a8a8a"/><rect x="1177.500" y="1070.500" width="5" height="3" rx="1.500" fill="#8a8a8a"/><rect x="1221.500" y="1070.500" width="5" height="3" rx="1.500" fill="#8a8a8a"/>
<!-- tray -->
<path d="M1690 1058l5-5 5 5" fill="none" stroke="#222" stroke-width="1.500"/>
<text x="1722" y="1060" textLength="22" class="w" style="font-size:12px">ENG</text>
<path d="M1763 1052a11 11 0 0 1 16 0M1766 1055a7 7 0 0 1 10 0M1769 1058a3 3 0 0 1 4 0" fill="none" stroke="#222" stroke-width="1.300"/><circle cx="1771" cy="1061" r="1.400" fill="#222"/>
<path d="M1788 1053h3l4-4v14l-4-4h-3zM1798 1052a5 5 0 0 1 0 8M1801 1050a8 8 0 0 1 0 12" fill="none" stroke="#222" stroke-width="1.200"/>
<text x="1848" y="1050" textLength="28" class="w" style="font-size:12px">22:55</text>
<text x="1819.500" y="1066" textLength="56.500" class="w" style="font-size:12px">24.07.2025</text>
<path d="M1886 1061c2-2 1-5 2-8 1-2 3-3 5-2M1899 1061c-2-2-1-4-2-6M1885 1061h15M1890 1063a3 3 0 0 0 5 0" fill="none" stroke="#222" stroke-width="1.200"/><text x="1894" y="1053" class="w" style="font-size:8px">z</text>

<!-- score overlay -->
<rect x="1572" y="1" width="346" height="122" rx="3" fill="#000" fill-opacity=".3"/>
<path d="M1799 9h10" stroke="#6a6a6a" stroke-width="1"/>
<rect x="1845" y="6.500" width="7" height="7" fill="none" stroke="#6a6a6a"/><rect x="1847" y="4.500" width="7" height="7" fill="none" stroke="#6a6a6a" stroke-dasharray="9 5"/>
<path d="M1891 4l10 10M1901 4l-10 10" stroke="#6a6a6a" stroke-width="1"/>
<text x="1580" y="78" textLength="207" style="font-size:58px;fill:#fff;font-family:'Liberation Sans',sans-serif">Score: 6</text>

<!-- toast -->
<rect x="1522" y="898" width="377" height="118" fill="#c9c9c9" fill-opacity=".82"/>
<rect x="1538" y="916" width="20" height="20" rx="3" fill="#fff"/>
<path d="M1541 932v-11l7 5.500 7-5.500v11" fill="none" stroke="#e33b2e" stroke-width="2.600"/><path d="M1541 922v10" stroke="#3e82f1" stroke-width="2.600"/><path d="M1555 922v10" stroke="#2fa84f" stroke-width="2.600"/>
<text x="1572" y="934" textLength="53" class="w" style="font-size:20px">Gmail</text>
<text x="1575" y="963" textLength="292" class="w" style="font-size:20px">You won a MILLION DOLLARS!!!</text>
<rect x="1638" y="978" width="147" height="25" rx="1" fill="#f0f0f2"/>
<text x="1711.500" y="995" text-anchor="middle" class="w" style="font-size:12px">Open</text>
</svg>
</body></html>
